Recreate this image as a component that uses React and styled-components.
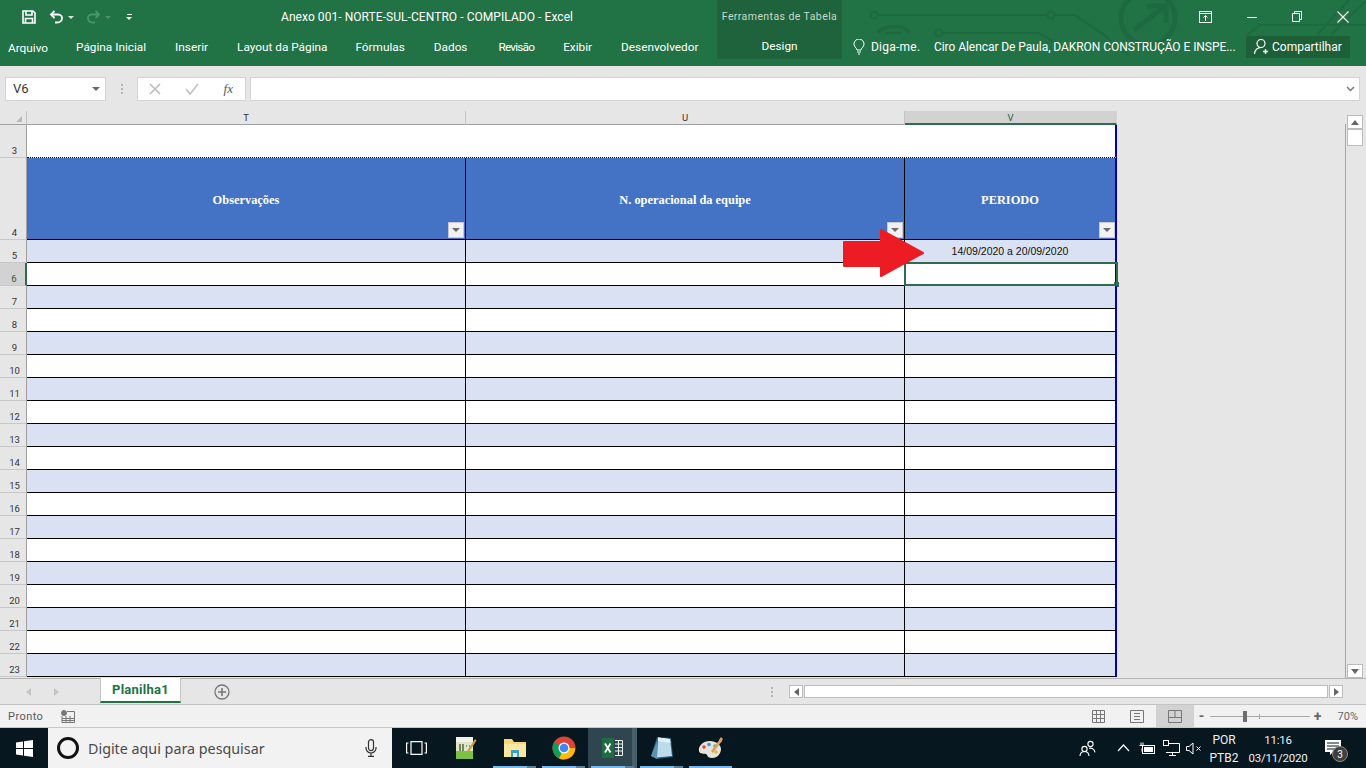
import React from "react";
import styled, { createGlobalStyle } from "styled-components";

const Global = createGlobalStyle`
  html, body { margin: 0; padding: 0; background: #e6e6e6; }
  body { font-family: Roboto, "Liberation Sans", sans-serif; overflow: hidden; }
  * { box-sizing: border-box; }
`;

const Page = styled.div`
  width: 1366px; height: 768px; display: flex; flex-direction: column; overflow: hidden;
`;

/* ---------- ribbon header ---------- */
const Header = styled.header`
  position: relative; height: 66px; flex: none; background: #217346; color: #fff; display: flex;
`;
const Circuit = styled.svg`
  position: absolute; left: 842px; top: 0; pointer-events: none;
`;
const HeaderLeft = styled.div`width: 717px; display: flex; flex-direction: column; position: relative;`;
const TopRow = styled.div`height: 34px; display: flex; align-items: center; position: relative;`;
const Qat = styled.div`display: flex; align-items: center; width: 281px; padding-left: 21px;`;
const QatButton = styled.span`display: inline-flex; margin-right: ${p => p.$gap}px;`;
const QatMenu = styled.span`display: inline-flex; flex-direction: column; align-items: center; gap: 2px;`;
const QatBar = styled.i`display: block; width: 5px; height: 1px; background: #fff;`;
const Title = styled.div`font-size: 12px; letter-spacing: 0.06px; white-space: nowrap;`;
const Tabs = styled.nav`display: flex; padding-left: 8px; gap: 29px; align-items: center; height: 26px;`;
const Tab = styled.span`
  font-size: 11.8px; white-space: nowrap; position: relative; top: ${p => (p.$file ? 1 : 0)}px;
  margin-right: ${p => p.$after || 0}px; letter-spacing: ${p => p.$track || 0}px;
`;
const ToolGroup = styled.div`
  width: 125px; height: 59px; background: #1e633b; display: flex; flex-direction: column; align-items: center;
`;
const ToolTitle = styled.div`height: 34px; display: flex; align-items: center; font-size: 10.5px; letter-spacing: 0.04em; color: #c6d9cc; white-space: nowrap;`;
const ToolTab = styled.div`height: 26px; display: flex; align-items: center; font-size: 11.8px;`;
const HeaderRight = styled.div`flex: 1; display: flex; flex-direction: column; position: relative;`;
const WindowButtons = styled.div`height: 33px; display: flex; justify-content: flex-end; align-items: center; padding-right: 17px; gap: 35px;`;
const TellRow = styled.div`height: 27px; display: flex; align-items: center; padding-left: 11px; font-size: 12px; white-space: nowrap;`;
const Tell = styled.span`display: inline-flex; align-items: center; gap: 6px; width: 81px; letter-spacing: 0.02em;`;
const UserName = styled.span`width: 312px; letter-spacing: -0.005em;`;
const Share = styled.span`
  height: 22px; width: 104px; background: #1d6038; display: inline-flex; align-items: center; padding-left: 7px; gap: 2px;
`;

/* ---------- formula bar ---------- */
const FormulaBar = styled.div`
  height: 45px; flex: none; background: #e6e6e6; display: flex; align-items: center; padding: 0 6px 0 5px;
`;
const Box = styled.div`
  height: 24px; background: #fff; border: 1px solid #d4d4d4; display: flex; align-items: center; font-size: 13px; color: #333;
`;
const NameBox = styled(Box)`width: 101px; padding: 0 5px 0 7px; justify-content: space-between;`;
const Caret = styled.span`
  width: 0; height: 0; border-left: ${p => p.$s || 4}px solid transparent; border-right: ${p => p.$s || 4}px solid transparent; border-top: ${p => p.$s || 4}px solid ${p => p.$c || "#6a6a6a"};
`;
const Grip = styled.div`width: 31px; display: flex; flex-direction: column; align-items: center; gap: 2px;`;
const GripDot = styled.i`width: 2px; height: 2px; background: #b4b4b4; display: block;`;
const FuncBox = styled(Box)`width: 109px; justify-content: space-between; padding: 0 12px 0 11px; margin-right: 4px;`;
const Fx = styled.span`font-family: "Liberation Serif", serif; font-style: italic; font-size: 13px; color: #555;`;
const InputBox = styled(Box)`flex: 1; justify-content: flex-end; padding-right: 4px;`;

/* ---------- sheet ---------- */
const Main = styled.div`height: 567px; flex: none; display: flex; background: #e6e6e6;`;
const Sheet = styled.div`
  position: relative; width: 1346px; overflow: hidden;
  &::after { content: ""; position: absolute; right: 0; top: 13px; bottom: 0; width: 1px; background: #a6a6a6; }
`;
const Columns = "27px 439px 439px 212px";
const ColHeaders = styled.div`display: grid; grid-template-columns: ${Columns}; height: 14px; background: #e6e6e6;`;
const Corner = styled.div`position: relative; border-right: 1px solid #c4c4c4; border-bottom: 1px solid #a0a0a0;`;
const CornerMark = styled.span`
  position: absolute; right: 4px; bottom: 2px; width: 0; height: 0; border-left: 6px solid transparent; border-bottom: 6px solid #b8b8b8;
`;
const ColHead = styled.div`
  display: flex; align-items: center; justify-content: center; font-size: 9.5px; color: ${p => (p.$active ? "#1f5c3d" : "#333")};
  background: ${p => (p.$active ? "#d2d2d2" : "#e6e6e6")};
  border-right: 1px solid ${p => (p.$active ? "#d2d2d2" : "#c4c4c4")};
  border-bottom: ${p => (p.$active ? "2px solid #2f6b4f" : "1px solid #a0a0a0")};
`;
const Row = styled.div`display: grid; grid-template-columns: ${Columns}; height: ${p => p.$h}px;`;
const RowHead = styled.div`
  display: flex; align-items: flex-end; justify-content: center; font-size: 9.5px; padding: 0 0 1px 3px; color: ${p => (p.$active ? "#1f5c3d" : "#333")};
  background: ${p => (p.$active ? "#d2d2d2" : "#e6e6e6")};
  border-right: ${p => (p.$active ? "2px solid #2f6b4f" : "1px solid #a0a0a0")};
  border-bottom: 1px solid #c8c8c8;
`;
const TitleSpacer = styled.div`grid-column: span 3; background: #fff; border-right: 2px solid #0000b4; border-bottom: 1px dotted #000;`;
const Cell = styled.div`
  position: relative; background: ${p => p.$bg}; border-bottom: 1px solid #000; border-right: ${p => (p.$last ? "2px solid #0000b4" : "1px solid #000")};
  display: flex; align-items: center; justify-content: center;
`;
const HeadText = styled.span`
  font-family: "Liberation Serif", serif; font-weight: 700; font-size: 12.4px; color: #fff; position: relative; top: 2px;
`;
const FilterButton = styled.span`
  position: absolute; right: ${p => (p.$last ? 0 : 1)}px; bottom: 1px; width: 16px; height: 16px; background: #f1f1f1; border: 1px solid #c8c8d0;
  display: flex; align-items: center; justify-content: center;
`;
const DateText = styled.span`font-family: "Liberation Sans", sans-serif; font-size: 10.5px; color: #111;`;
const Selection = styled.span`position: absolute; left: -1px; top: -1px; width: 214px; height: 24px; border: 2px solid #2f6b4f;`;
const Handle = styled.span`position: absolute; right: -3px; bottom: -3px; width: 5px; height: 5px; background: #2f6b4f; border: 0;`;
const Arrow = styled.svg`position: absolute; left: 842px; top: 118px;`;

const VScroll = styled.div`width: 20px; display: flex; flex-direction: column; padding: 4px 2px 0 1px; background: #e6e6e6;`;
const ScrollBtn = styled.div`
  width: 16px; height: 14px; background: #fff; border: 1px solid #bcbcbc; display: flex; align-items: center; justify-content: center; flex: none;
`;
const Thumb = styled.div`width: 16px; height: 17px; background: #fff; border: 1px solid #bcbcbc; flex: none;`;
const Track = styled.div`flex: 1; background: #e6e6e6;`;
const Tri = styled.span`
  width: 0; height: 0;
  ${p => p.$d === "up" && "border-left: 4px solid transparent; border-right: 4px solid transparent; border-bottom: 5px solid #666;"}
  ${p => p.$d === "down" && "border-left: 4px solid transparent; border-right: 4px solid transparent; border-top: 5px solid #666;"}
  ${p => p.$d === "left" && `border-top: 4px solid transparent; border-bottom: 4px solid transparent; border-right: 5px solid ${p.$c || "#666"};`}
  ${p => p.$d === "right" && `border-top: 4px solid transparent; border-bottom: 4px solid transparent; border-left: 5px solid ${p.$c || "#666"};`}
`;

/* ---------- sheet tabs ---------- */
const TabBar = styled.div`
  height: 27px; flex: none; background: #e6e6e6; border-top: 1px solid #b4b4b4; border-bottom: 1px solid #c4c4c4; display: flex; align-items: flex-start;
`;
const TabNav = styled.div`width: 100px; height: 25px; display: flex; align-items: center; padding-left: 26px; gap: 23px;`;
const SheetTab = styled.div`
  width: 81px; height: 25px; background: #fff; border-left: 1px solid #c4c4c4; border-right: 1px solid #c4c4c4; border-bottom: 2px solid #217346;
  display: flex; align-items: center; justify-content: center; font-weight: 700; font-size: 13px; color: #217346; margin-top: -1px; letter-spacing: 0.02em;
`;
const AddSheet = styled.span`margin-left: 33px; display: inline-flex; height: 25px; align-items: center;`;
const TabGrip = styled(Grip)`width: 16px; height: 25px; justify-content: center; margin-left: 534px;`;
const HScroll = styled.div`display: flex; height: 25px; align-items: center; margin-left: 9px; gap: 1px;`;
const HBtn = styled.div`width: 14px; height: 13px; background: #fff; border: 1px solid #bcbcbc; display: flex; align-items: center; justify-content: center;`;
const HThumb = styled.div`width: 524px; height: 13px; background: #fff; border: 1px solid #bcbcbc;`;

/* ---------- status bar ---------- */
const StatusBar = styled.div`
  height: 23px; flex: none; background: #f1f1f1; border-bottom: 1px solid #c6c6c6; display: flex; align-items: center; font-size: 11px; color: #5a5a5a; padding-left: 8px;
`;
const Ready = styled.span`width: 53px; letter-spacing: 0.04em;`;
const StatusRight = styled.div`margin-left: auto; display: flex; align-items: center; height: 100%; padding-right: 8px;`;
const ViewBtn = styled.span`
  width: 38px; height: 100%; display: inline-flex; align-items: center; justify-content: center; background: ${p => (p.$on ? "#d2d2d2" : "transparent")};
`;
const ZoomWrap = styled.div`display: flex; align-items: center; margin-left: 3px;`;
const ZoomSign = styled.span`font-size: 14px; font-weight: 700; color: #666; line-height: 1; width: 10px; text-align: center;`;
const Slider = styled.div`position: relative; width: 100px; height: 1px; background: #a8a8a8; margin: 0 3px;`;
const SliderThumb = styled.span`position: absolute; left: 33px; top: -5px; width: 4px; height: 11px; background: #6e6e6e;`;
const SliderTick = styled.span`position: absolute; left: 49px; top: -2px; width: 1px; height: 5px; background: #a8a8a8;`;
const ZoomPct = styled.span`margin-left: 15px; font-size: 11px; color: #666;`;

/* ---------- windows taskbar ---------- */
const Taskbar = styled.footer`
  height: 40px; flex: none; background: #06171f; display: flex; align-items: center; color: #f0f0f0;
`;
const StartBtn = styled.div`width: 48px; height: 100%; display: flex; align-items: center; justify-content: center;`;
const Search = styled.div`
  width: 344px; height: 100%; background: #f2f2f2; display: flex; align-items: center; padding: 0 15px 0 9px; color: #4a4a4a; font-size: 14.3px; font-family: "Noto Sans", Roboto, sans-serif;
`;
const Cortana = styled.span`width: 22px; height: 22px; border-radius: 50%; border: 3px solid #111; margin-right: 9px; flex: none;`;
const Mic = styled.span`margin-left: auto; display: inline-flex;`;
const TaskItem = styled.div`
  position: relative; width: 49px; height: 100%; display: flex; align-items: center; justify-content: center; flex: none;
  background: ${p => (p.$active ? "linear-gradient(to right, #2f4650 0 44px, #47606c 44px)" : "transparent")};
  &::after {
    content: ""; display: ${p => (p.$run ? "block" : "none")}; position: absolute; left: 3px; right: 3px; bottom: 0; height: 2px;
    background: ${p => (p.$stack ? "linear-gradient(to right, #76b9ed 0 78%, #5b7f96 78%)" : "#76b9ed")};
  }
`;
const Tray = styled.div`margin-left: auto; display: flex; align-items: center; height: 100%;`;
const TrayIcon = styled.span`display: inline-flex; width: ${p => p.$w}px; justify-content: center;`;
const Lang = styled.div`
  width: 40px; text-align: center; font-size: 12px; line-height: 18px; padding-top: 2px; font-family: Roboto, sans-serif;
`;
const Clock = styled.div`
  width: 66px; text-align: center; font-size: 11.5px; line-height: 18px; padding-top: 1px; letter-spacing: -0.2px; font-family: Roboto, sans-serif; margin-left: 1px;
`;
const Notify = styled.span`position: relative; display: inline-flex; width: 32px; justify-content: center; margin: 0 17px 0 6px;`;
const Badge = styled.span`
  position: absolute; left: 15px; top: 6px; width: 16px; height: 16px; border-radius: 50%; background: #3e3e3e; border: 1px solid #8a8a8a; font-size: 10px; display: flex; align-items: center; justify-content: center; color: #fff;
`;

/* ---------- drawings ---------- */
const SaveIcon = () => (
  <svg width="16" height="16" viewBox="0 0 16 16" fill="none" stroke="#fff" strokeWidth="1.6">
    <path d="M2 2h10l2 2v10H2z" /><path d="M5 2v4h6V2" /><path d="M4.5 14V9.5h7V14" />
  </svg>
);
const UndoIcon = ({ c = "#fff", flip }) => (
  <svg width="15" height="14" viewBox="0 0 15 14" fill="none" stroke={c} strokeWidth="1.8" style={flip ? { transform: "scaleX(-1)" } : undefined}>
    <path d="M5.5 1 2 4.5 5.5 8" /><path d="M2.5 4.5H9c6 0 5 8-1 8H6" />
  </svg>
);
const CircuitArt = () => (
  <Circuit width="524" height="60" viewBox="0 0 524 60" fill="none" stroke="#1e6a40" strokeWidth="2.2">
    <circle cx="32" cy="15" r="3.5" /><path d="M36 15h169M213 15h20l29 20 24 20" /><circle cx="209" cy="15" r="3.5" />
    <circle cx="97" cy="33" r="3.5" /><path d="M101 33h96l16 10" />
    <path d="M36 33a18 12 0 0 1 32 0" strokeWidth="3.5" /><path d="M43 33h17" strokeWidth="2.500" />
    <circle cx="306" cy="18" r="27" strokeWidth="5" /><path d="M292 30 322 7M305 6h19v17" strokeWidth="5" />
    <path d="M405 35l13-10h106M475 35 507 0M489 35 524 1" />
  </Circuit>
);
const Bulb = () => (
  <svg width="12" height="16" viewBox="0 0 12 16" fill="none" stroke="#fff" strokeWidth="1">
    <path d="M4 11C3.5 8.5 1 8 1 5a5 5 0 0 1 10 0c0 3-2.500 3.500-3 6z" /><path d="M4 13h4M5 15h2" />
  </svg>
);
const Person = () => (
  <svg width="17" height="17" viewBox="0 0 17 17" fill="none" stroke="#fff" strokeWidth="1.2">
    <circle cx="8" cy="5.500" r="4" /><path d="M1.500 16c0-4 3-6.500 6.500-6.500" /><path d="M12.500 11v5M10 13.500h5" strokeWidth="1.400" />
  </svg>
);
const RibbonDisplay = () => (
  <svg width="13" height="12" viewBox="0 0 13 12" fill="none" stroke="#fff">
    <rect x=".5" y=".5" width="12" height="11" /><path d="M.5 2.500h12M6.500 10V4.500M4.500 6.500l2-2 2 2" />
  </svg>
);
const MinIcon = () => <svg width="10" height="10" viewBox="0 0 10 10" stroke="#fff"><path d="M0 5.500h10" /></svg>;
const RestoreIcon = () => (
  <svg width="10" height="11" viewBox="0 0 10 11" fill="none" stroke="#fff"><path d="M.5 2.500h7v8h-7zM2.500 2.500v-2h7v8h-2" /></svg>
);
const CloseIcon = () => <svg width="12" height="12" viewBox="0 0 12 12" stroke="#fff" strokeWidth="1.100"><path d="M.5.500l11 11M11.500.500l-11 11" /></svg>;
const CrossMark = () => <svg width="12" height="12" viewBox="0 0 12 12" stroke="#bcbcbc" strokeWidth="1.600"><path d="M1 1l10 10M11 1 1 11" /></svg>;
const CheckMark = () => <svg width="14" height="12" viewBox="0 0 14 12" fill="none" stroke="#c4c4c4" strokeWidth="1.800"><path d="M1 6l4 5 8-10" /></svg>;
const Chevron = () => <svg width="9" height="6" viewBox="0 0 9 6" fill="none" stroke="#777" strokeWidth="1.500"><path d="M1 1l3.500 3.500L8 1" /></svg>;
const PlusCircle = () => (
  <svg width="16" height="16" viewBox="0 0 16 16" fill="none" stroke="#777" strokeWidth="1.300">
    <circle cx="8" cy="8" r="7" /><path d="M8 4v8M4 8h8" strokeWidth="1.600" />
  </svg>
);
const MacroIcon = () => (
  <svg width="14" height="13" viewBox="0 0 14 13" fill="none" stroke="#777">
    <circle cx="3" cy="3" r="2.500" fill="#777" /><path d="M6 1.500h7.500v11H1V6M1 8.500h12.500M1 10.500h12.500M5 6v6.500M9 6v6.500" />
  </svg>
);
const GridView = () => (
  <svg width="13" height="13" viewBox="0 0 13 13" fill="none" stroke="#777"><path d="M.5.500h12v12H.5zM.5 4.500h12M.5 8.500h12M4.500.500v12M8.500.500v12" /></svg>
);
const PageView = () => (
  <svg width="14" height="13" viewBox="0 0 14 13" fill="none" stroke="#777"><path d="M.5.500h13v12H.5zM4 3.500h6M4 6.500h6M4 9.500h6" /></svg>
);
const BreakView = () => (
  <svg width="14" height="13" viewBox="0 0 14 13" fill="none" stroke="#777"><path d="M.5.500h13v12H.5zM.5 7.500h13M7 .500v7" /></svg>
);
const WinLogo = () => (
  <svg width="17" height="17" viewBox="0 0 17 17" fill="#fff"><path d="M0 2.500 7 1.500v6.500H0zM8 1.300 17 0v8H8zM0 9h7v6.500l-7-1zM8 9h9v8l-9-1.300z" /></svg>
);
const MicIcon = () => (
  <svg width="12" height="18" viewBox="0 0 12 18" fill="none" stroke="#333" strokeWidth="1.200">
    <rect x="3.500" y=".6" width="5" height="11" rx="2.500" /><path d="M1 8v1a5 5 0 0 0 10 0V8M6 14v3M3 17.300h6" />
  </svg>
);
const TaskView = () => (
  <svg width="21" height="14" viewBox="0 0 21 14" fill="none" stroke="#fff" strokeWidth="1.200"><path d="M5 .6h11v12.800H5zM2.500 2H.6v10h1.900M18.500 2h1.900v10h-1.900" /></svg>
);
const NotesGreen = () => (
  <svg width="22" height="24" viewBox="0 0 22 24">
    <rect x="1" y="1" width="17" height="22" fill="#dfe6c9" /><rect x="1" y="1" width="17" height="5" fill="#f4f4e6" />
    <rect x="1" y="15" width="17" height="8" fill="#7cc243" />
    <path d="M5 8v7M8 8v7M11 10h1M14 10h1" stroke="#2e4a1e" strokeWidth="1.200" />
    <path d="M12 15 20 3l1.500 1.500L14 16z" fill="#c9a33a" />
  </svg>
);
const FolderIcon = () => (
  <svg width="24" height="20" viewBox="0 0 24 20">
    <path d="M1 1h8l2 3h12v15H1z" fill="#f6d874" /><path d="M1 6h22v13H1z" fill="#fbe6a2" />
    <path d="M8 12h8v7H8z" fill="#3aa0c8" /><path d="M10 15h4v4h-4z" fill="#d6eef8" />
  </svg>
);
const ChromeIcon = () => (
  <svg width="24" height="24" viewBox="0 0 24 24">
    <circle cx="12" cy="12" r="11.500" fill="#db4437" />
    <path d="M12 12 2.100 6.200A11.500 11.500 0 0 0 7 22.400z" fill="#0f9d58" />
    <path d="M12 12h11.200A11.500 11.500 0 0 1 7 22.400z" fill="#fbbc05" />
    <circle cx="12" cy="12" r="5.500" fill="#fff" /><circle cx="12" cy="12" r="4.300" fill="#4285f4" />
  </svg>
);
const ExcelIcon = () => (
  <svg width="22" height="20" viewBox="0 0 22 20">
    <path d="M13 2.500h7.500v15H13M13 6h7.500M13 9.500h7.500M13 13h7.500M16.500 2.500v15" stroke="#e8f3ec" strokeWidth="1" fill="none" />
    <rect x="0" y="0" width="12" height="20" fill="#1d6f42" />
    <path d="M3 5.500 8.500 14.500M8.500 5.500 3 14.500" stroke="#fff" strokeWidth="1.800" />
  </svg>
);
const NoteBlue = () => (
  <svg width="24" height="24" viewBox="0 0 24 24">
    <path d="M7 1 21 2l2 19-16 2-6-3z" fill="#2e5f7c" /><path d="M8 1.500 20 3l2 17-15 1.500z" fill="#bcdcec" />
    <path d="M8 1.500 20 3l.5 4L8 5z" fill="#e2f0f6" /><path d="M1 20 7 5v18z" fill="#5d93ae" />
  </svg>
);
const Palette = () => (
  <svg width="26" height="24" viewBox="0 0 26 24">
    <path d="M12 5C5 5 0 10 1 15c1 4 5 2 7 3s1 4 6 4c6 0 9-5 9-9s-5-8-11-8z" fill="#e8e4dc" />
    <circle cx="6" cy="11" r="1.800" fill="#d9483b" /><circle cx="11" cy="8.500" r="1.800" fill="#3d9ad1" />
    <circle cx="17" cy="10" r="1.800" fill="#6ab04c" /><circle cx="18" cy="16" r="1.800" fill="#e8b83a" />
    <path d="M13 15 22 3l2 2-9 12z" fill="#d3a26a" /><path d="M21 4l2-3 2 2-2 3z" fill="#e39a62" />
  </svg>
);
const PeopleIcon = () => (
  <svg width="17" height="17" viewBox="0 0 17 17" fill="none" stroke="#fff" strokeWidth="1.100">
    <circle cx="5.500" cy="9" r="2.600" /><path d="M1 16c.2-3 2-4.500 4.500-4.500S9.800 13 10 16" />
    <circle cx="11.500" cy="4" r="2.600" /><path d="M10 8.300c3-.8 5.500 1 6 4" />
  </svg>
);
const UpChevron = () => <svg width="13" height="8" viewBox="0 0 13 8" fill="none" stroke="#fff" strokeWidth="1.200"><path d="M1 7l5.500-6L12 7" /></svg>;
const BatteryIcon = () => (
  <svg width="17" height="13" viewBox="0 0 17 13" fill="none" stroke="#fff">
    <rect x="3.500" y="3.500" width="12" height="8" /><rect x="5" y="5" width="9" height="5" fill="#fff" stroke="none" />
    <path d="M.5 3.500h5M2 .5v3M4 .5v3M3 6.500v3" />
  </svg>
);
const NetIcon = () => (
  <svg width="17" height="16" viewBox="0 0 17 16" fill="none" stroke="#fff">
    <path d="M3 3.500h13.500v9H3M9.500 12.500v2.500M6 15.500h7" /><rect x=".5" y=".5" width="5" height="5" fill="#06171f" />
  </svg>
);
const MuteIcon = () => (
  <svg width="16" height="13" viewBox="0 0 16 13" fill="none" stroke="#fff">
    <path d="M.5 4.500h2.500L7 1v11L3 8.500H.5zM10.500 4.500l4 4M14.500 4.500l-4 4" />
  </svg>
);
const ChatIcon = () => (
  <svg width="16" height="16" viewBox="0 0 16 16"><path d="M0 0h16v12H8l-3 3v-3H0z" fill="#fff" /><path d="M2 3h12M2 6h12M2 9h8" stroke="#06171f" /></svg>
);

const rowNumbers = Array.from({ length: 19 }, (_, i) => i + 5);
const headers = ["Observações", "N. operacional da equipe", "PERIODO"];
const ribbonTabs = [
  { label: "Arquivo", after: -1 },
  { label: "Página Inicial" },
  { label: "Inserir" },
  { label: "Layout da Página", after: -1 },
  { label: "Fórmulas" },
  { label: "Dados", after: 2 },
  { label: "Revisão", track: -0.8 },
  { label: "Exibir" },
  { label: "Desenvolvedor" },
];

const App = () => (
  <Page>
    <Global />
    <Header>
      <CircuitArt />
      <HeaderLeft>
        <TopRow>
          <Qat>
            <QatButton $gap={12}><SaveIcon /></QatButton>
            <QatButton $gap={4}><UndoIcon /></QatButton>
            <QatButton $gap={12}><Caret $s={3} $c="#d6e6db" /></QatButton>
            <QatButton $gap={4}><UndoIcon c="#4d9370" flip /></QatButton>
            <QatButton $gap={15}><Caret $s={3} $c="#4d9370" /></QatButton>
            <QatMenu><QatBar /><Caret $s={3} $c="#fff" /></QatMenu>
          </Qat>
          <Title>Anexo 001- NORTE-SUL-CENTRO - COMPILADO - Excel</Title>
        </TopRow>
        <Tabs>
          {ribbonTabs.map((t, i) => (
            <Tab key={t.label} $file={i === 0} $after={t.after} $track={t.track}>{t.label}</Tab>
          ))}
        </Tabs>
      </HeaderLeft>
      <ToolGroup>
        <ToolTitle>Ferramentas de Tabela</ToolTitle>
        <ToolTab>Design</ToolTab>
      </ToolGroup>
      <HeaderRight>
        <WindowButtons>
          <RibbonDisplay /><MinIcon /><RestoreIcon /><CloseIcon />
        </WindowButtons>
        <TellRow>
          <Tell><Bulb />Diga-me.</Tell>
          <UserName>Ciro Alencar De Paula, DAKRON CONSTRUÇÃO E INSPE...</UserName>
          <Share><Person />Compartilhar</Share>
        </TellRow>
      </HeaderRight>
    </Header>

    <FormulaBar>
      <NameBox>V6<Caret /></NameBox>
      <Grip><GripDot /><GripDot /><GripDot /></Grip>
      <FuncBox><CrossMark /><CheckMark /><Fx>fx</Fx></FuncBox>
      <InputBox><Chevron /></InputBox>
    </FormulaBar>

    <Main>
      <Sheet>
        <ColHeaders>
          <Corner><CornerMark /></Corner>
          <ColHead>T</ColHead>
          <ColHead>U</ColHead>
          <ColHead $active>V</ColHead>
        </ColHeaders>
        <Row $h={33}>
          <RowHead>3</RowHead>
          <TitleSpacer />
        </Row>
        <Row $h={82}>
          <RowHead>4</RowHead>
          {headers.map((h, i) => (
            <Cell key={h} $bg="#4472c4" $last={i === 2}>
              <HeadText>{h}</HeadText>
              <FilterButton $last={i === 2}><Caret /></FilterButton>
            </Cell>
          ))}
        </Row>
        {rowNumbers.map(n => (
          <Row key={n} $h={23}>
            <RowHead $active={n === 6}>{n}</RowHead>
            {[0, 1, 2].map(c => (
              <Cell key={c} $bg={n % 2 ? "#d9e1f2" : "#fff"} $last={c === 2}>
                {n === 5 && c === 2 && <DateText>14/09/2020 a 20/09/2020</DateText>}
                {n === 6 && c === 2 && <Selection><Handle /></Selection>}
              </Cell>
            ))}
          </Row>
        ))}
        <Arrow width="84" height="52" viewBox="0 0 84 52">
          <path d="M2 13h37V1L81 24 39 47V37H2z" fill="#ed1c24" stroke="#ed1c24" strokeWidth="2" strokeLinejoin="round" />
        </Arrow>
      </Sheet>
      <VScroll>
        <ScrollBtn><Tri $d="up" /></ScrollBtn>
        <Thumb />
        <Track />
        <ScrollBtn><Tri $d="down" /></ScrollBtn>
      </VScroll>
    </Main>

    <TabBar>
      <TabNav><Tri $d="left" $c="#c4c4c4" /><Tri $d="right" $c="#c4c4c4" /></TabNav>
      <SheetTab>Planilha1</SheetTab>
      <AddSheet><PlusCircle /></AddSheet>
      <TabGrip><GripDot /><GripDot /><GripDot /></TabGrip>
      <HScroll>
        <HBtn><Tri $d="left" /></HBtn>
        <HThumb />
        <HBtn><Tri $d="right" /></HBtn>
      </HScroll>
    </TabBar>

    <StatusBar>
      <Ready>Pronto</Ready>
      <MacroIcon />
      <StatusRight>
        <ViewBtn><GridView /></ViewBtn>
        <ViewBtn><PageView /></ViewBtn>
        <ViewBtn $on><BreakView /></ViewBtn>
        <ZoomWrap>
          <ZoomSign>-</ZoomSign>
          <Slider><SliderTick /><SliderThumb /></Slider>
          <ZoomSign>+</ZoomSign>
        </ZoomWrap>
        <ZoomPct>70%</ZoomPct>
      </StatusRight>
    </StatusBar>

    <Taskbar>
      <StartBtn><WinLogo /></StartBtn>
      <Search>
        <Cortana />
        Digite aqui para pesquisar
        <Mic><MicIcon /></Mic>
      </Search>
      <TaskItem><TaskView /></TaskItem>
      <TaskItem><NotesGreen /></TaskItem>
      <TaskItem $run $stack><FolderIcon /></TaskItem>
      <TaskItem $run $stack><ChromeIcon /></TaskItem>
      <TaskItem $run $stack $active><ExcelIcon /></TaskItem>
      <TaskItem $run $stack><NoteBlue /></TaskItem>
      <TaskItem $run><Palette /></TaskItem>
      <Tray>
        <TrayIcon $w={46}><PeopleIcon /></TrayIcon>
        <TrayIcon $w={26}><UpChevron /></TrayIcon>
        <TrayIcon $w={22}><BatteryIcon /></TrayIcon>
        <TrayIcon $w={26}><NetIcon /></TrayIcon>
        <TrayIcon $w={20}><MuteIcon /></TrayIcon>
        <Lang>POR<br />PTB2</Lang>
        <Clock>11:16<br />03/11/2020</Clock>
        <Notify><ChatIcon /><Badge>3</Badge></Notify>
      </Tray>
    </Taskbar>
  </Page>
);

export default App;
